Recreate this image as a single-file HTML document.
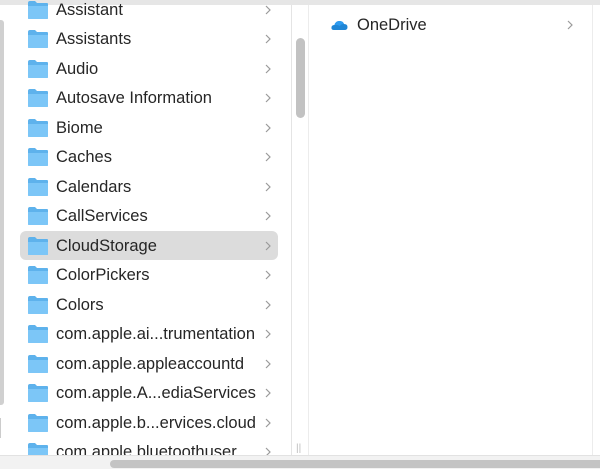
<!DOCTYPE html><html><head><style>
body{margin:0;width:600px;height:468px;overflow:hidden;background:#fff;font-family:"Liberation Sans",sans-serif;position:relative}
.top{position:absolute;left:0;top:0;width:600px;height:5px;background:#e6e6e6}
.lsb{position:absolute;left:0;top:20px;width:4px;height:385px;background:#d0d0d0;border-radius:0 3px 3px 0}
.lsb2{position:absolute;left:0;top:418px;width:1px;height:20px;background:#ccc}
.div1{position:absolute;left:291px;top:5px;width:1px;height:450px;background:#e4e4e4}
.sb{position:absolute;left:296px;top:38px;width:9px;height:80px;background:#c2c2c2;border-radius:5px}
.div2{position:absolute;left:308px;top:5px;width:1px;height:450px;background:#ececec}
.div3{position:absolute;left:592px;top:5px;width:1px;height:450px;background:#ececec}
.row{position:absolute;left:20px;width:258px;height:29px;font-size:16.5px;color:#262626}
.row.sel{background:#dcdcdc;border-radius:6px}
.row span{position:absolute;left:36px;top:6px;white-space:nowrap}
.f{position:absolute;left:7px;top:5px;width:22px;height:20px}
.ch{position:absolute;left:245px;top:10px;width:6px;height:10px}
.hsb{position:absolute;left:0;top:455px;width:600px;height:13px;background:#f2f2f2;border-top:1px solid #e2e2e2}
.hth{position:absolute;left:110px;top:460px;width:490px;height:8px;background:#c4c4c4;border-radius:4px 0 0 4px}
</style></head><body>
<div class="top"></div>
<div class="lsb"></div><div class="lsb2"></div>
<div class="div1"></div><div class="sb"></div><div class="div2"></div><div class="div3"></div>
<div style="position:absolute;left:296px;top:443px;color:#bbb;font-size:10px">||</div>
<svg width="0" height="0" style="position:absolute"><defs>
<symbol id="fo" viewBox="0 0 22 20"><path d="M1 3 Q1 1 3 1 H8 L10 3 H20 Q21 3 21 4 V18 Q21 19 20 19 H2 Q1 19 1 18Z" fill="#5eb2ec"/><path d="M1 6 H21 V18 Q21 19 20 19 H2 Q1 19 1 18Z" fill="#7cc6f7"/></symbol>
<symbol id="cv" viewBox="0 0 6 10"><path d="M1 1 L5 5 L1 9" fill="none" stroke="#9a9a9a" stroke-width="1.2"/></symbol>
</defs></svg>
<div class="row" style="top:-5px"><svg class="f"><use href="#fo"/></svg><span>Assistant</span><svg class="ch"><use href="#cv"/></svg></div>
<div class="row" style="top:24px"><svg class="f"><use href="#fo"/></svg><span>Assistants</span><svg class="ch"><use href="#cv"/></svg></div>
<div class="row" style="top:54px"><svg class="f"><use href="#fo"/></svg><span>Audio</span><svg class="ch"><use href="#cv"/></svg></div>
<div class="row" style="top:83px"><svg class="f"><use href="#fo"/></svg><span>Autosave Information</span><svg class="ch"><use href="#cv"/></svg></div>
<div class="row" style="top:113px"><svg class="f"><use href="#fo"/></svg><span>Biome</span><svg class="ch"><use href="#cv"/></svg></div>
<div class="row" style="top:142px"><svg class="f"><use href="#fo"/></svg><span>Caches</span><svg class="ch"><use href="#cv"/></svg></div>
<div class="row" style="top:172px"><svg class="f"><use href="#fo"/></svg><span>Calendars</span><svg class="ch"><use href="#cv"/></svg></div>
<div class="row" style="top:201px"><svg class="f"><use href="#fo"/></svg><span>CallServices</span><svg class="ch"><use href="#cv"/></svg></div>
<div class="row sel" style="top:231px"><svg class="f"><use href="#fo"/></svg><span>CloudStorage</span><svg class="ch"><use href="#cv"/></svg></div>
<div class="row" style="top:260px"><svg class="f"><use href="#fo"/></svg><span>ColorPickers</span><svg class="ch"><use href="#cv"/></svg></div>
<div class="row" style="top:290px"><svg class="f"><use href="#fo"/></svg><span>Colors</span><svg class="ch"><use href="#cv"/></svg></div>
<div class="row" style="top:319px"><svg class="f"><use href="#fo"/></svg><span>com.apple.ai...trumentation</span><svg class="ch"><use href="#cv"/></svg></div>
<div class="row" style="top:349px"><svg class="f"><use href="#fo"/></svg><span>com.apple.appleaccountd</span><svg class="ch"><use href="#cv"/></svg></div>
<div class="row" style="top:378px"><svg class="f"><use href="#fo"/></svg><span>com.apple.A...ediaServices</span><svg class="ch"><use href="#cv"/></svg></div>
<div class="row" style="top:408px"><svg class="f"><use href="#fo"/></svg><span>com.apple.b...ervices.cloud</span><svg class="ch"><use href="#cv"/></svg></div>
<div class="row" style="top:437px"><svg class="f"><use href="#fo"/></svg><span>com.apple.bluetoothuser</span><svg class="ch"><use href="#cv"/></svg></div>
<svg style="position:absolute;left:331px;top:19px" width="17" height="12" viewBox="0 0 17 12"><path d="M3 11 Q0 11 0.5 8 Q1 6 3.5 6 Q4.5 2 8.5 2 Q12 2 13 5 Q16.5 5 16.5 8 Q16.5 11 13.5 11Z" fill="#1f86d6"/><path d="M3.5 6 Q4.5 2 8.5 2 Q12 2 13 5 Q10 5 9 7 Q6 5.5 3.5 6Z" fill="#2d9bf0"/></svg>
<div style="position:absolute;left:357px;top:16px;font-size:16.5px;color:#262626">OneDrive</div>
<svg style="position:absolute;left:567px;top:20px" width="6" height="10"><use href="#cv"/></svg>
<div class="hsb"></div><div class="hth"></div>
</body></html>
